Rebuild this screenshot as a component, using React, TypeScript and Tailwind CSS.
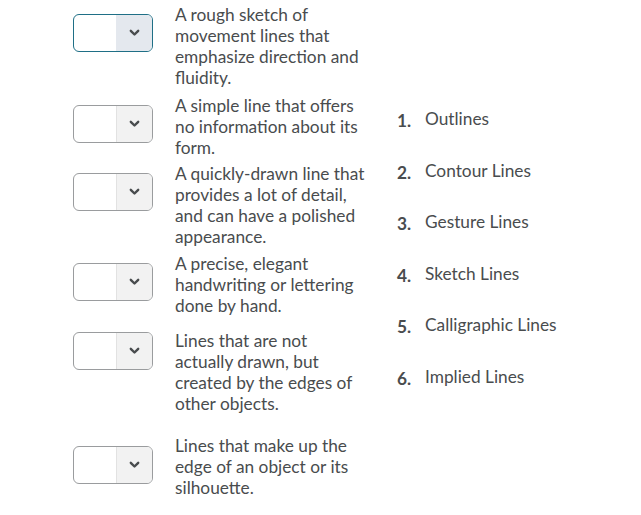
import React from "react";

const ROWS = [
  { lines: ["A rough sketch of", "movement lines that", "emphasize direction and", "fluidity."], rowGap: "mt-[4px]", selTop: "mt-[10px]", focused: true },
  { lines: ["A simple line that offers", "no information about its", "form."], rowGap: "mt-[7px]", selTop: "mt-[10px]" },
  { lines: ["A quickly-drawn line that", "provides a lot of detail,", "and can have a polished", "appearance."], rowGap: "mt-[5px]", selTop: "mt-[10px]" },
  { lines: ["A precise, elegant", "handwriting or lettering", "done by hand."], rowGap: "mt-[6px]", selTop: "mt-[10px]" },
  { lines: ["Lines that are not", "actually drawn, but", "created by the edges of", "other objects."], rowGap: "mt-[14px]", selTop: "mt-[2px]" },
  { lines: ["Lines that make up the", "edge of an object or its", "silhouette."], rowGap: "mt-[21px]", selTop: "mt-[11px]" },
];

const CHOICES = ["Outlines", "Contour Lines", "Gesture Lines", "Sketch Lines", "Calligraphic Lines", "Implied Lines"];

function Chevron() {
  return (
    <svg width="11" height="8" viewBox="0 0 11 8" className="text-[#494c4e]">
      <path d="M1.8 1.8 L5.5 5.5 L9.2 1.8" fill="none" stroke="currentColor" strokeWidth="2.4" strokeLinecap="round" strokeLinejoin="round" />
    </svg>
  );
}

function MatchSelect({ focused }: { focused?: boolean }) {
  return (
    <div
      className={`flex w-[80px] h-[38px] shrink-0 rounded-[6px] overflow-hidden border bg-white ${
        focused ? "border-[#1f6f86]" : "border-[#9a9c9e]"
      }`}
    >
      <div className="flex-1" />
      <div
        className={`w-[36px] flex items-center justify-center ${
          focused ? "bg-[#e4e8ee]" : "bg-[#f2f2f2] border-l border-[#e2e2e2]"
        }`}
      >
        <Chevron />
      </div>
    </div>
  );
}

export default function App() {
  return (
    <div className="w-[641px] h-[515px] bg-white text-[#494c4e] text-[17.3px] leading-[21px] flex" style={{ fontFamily: "Lato, 'Liberation Sans', sans-serif" }}>
      {/* Left: prompts with selects */}
      <div className="pl-[73px] flex flex-col">
        {ROWS.map((row, i) => (
          <div key={i} className={`flex items-start gap-[22px] ${row.rowGap}`}>
            <div className={row.selTop}>
              <MatchSelect focused={row.focused} />
            </div>
            <p className="w-[196px]">
              {row.lines.map((l, j) => (
                <span key={j} className="block whitespace-nowrap">{l}</span>
              ))}
            </p>
          </div>
        ))}
      </div>

      {/* Right: numbered choices */}
      <ol className="ml-[26px] pt-[108px] flex flex-col gap-[30.5px]">
        {CHOICES.map((c, i) => (
          <li key={c} className="flex items-start">
            <span className="w-[28px] font-bold translate-y-[2px]">{i + 1}.</span>
            <span>{c}</span>
          </li>
        ))}
      </ol>
    </div>
  );
}
